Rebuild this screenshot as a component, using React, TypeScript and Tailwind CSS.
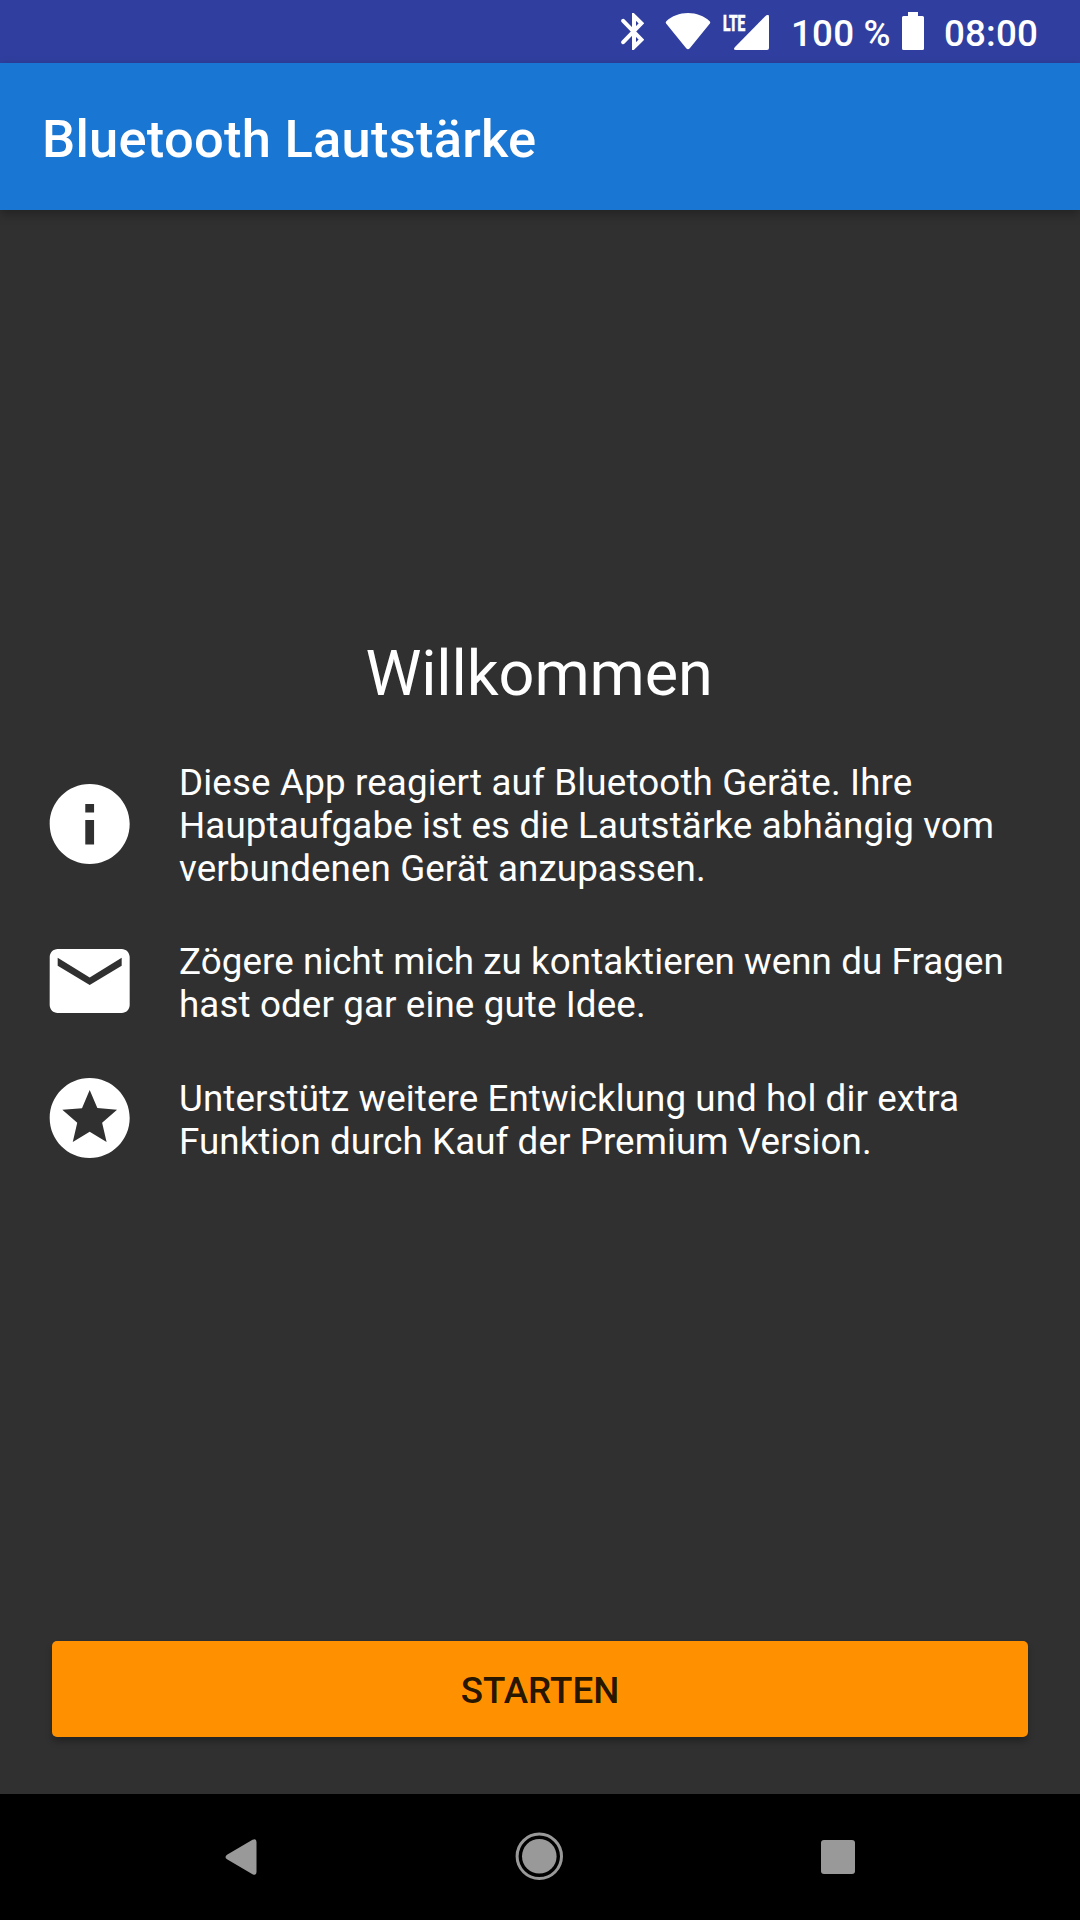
import type { ReactNode } from "react";

const features = [
  {
    path: "M12 2C6.48 2 2 6.48 2 12s4.48 10 10 10 10-4.48 10-10S17.52 2 12 2zm1.100 15.100h-2.200v-6.100h2.200v6.100zm0-8h-2.200V7h2.200v2.100z",
    lines: [
      { text: "Diese App reagiert auf Bluetooth Geräte. Ihre", spacing: "tracking-[0.15px]" },
      { text: "Hauptaufgabe ist es die Lautstärke abhängig vom", spacing: "tracking-[0.11px]" },
      { text: "verbundenen Gerät anzupassen.", spacing: "tracking-[0.085px]" },
    ],
  },
  {
    path: "M20 4H4c-1.1 0-1.99.9-1.99 2L2 18c0 1.1.9 2 2 2h16c1.1 0 2-.9 2-2V6c0-1.1-.9-2-2-2zm0 4.200l-8 4.800-8-4.800V6.200l8 4.900 8-4.900V8.200z",
    lines: [
      { text: "Zögere nicht mich zu kontaktieren wenn du Fragen", spacing: "tracking-[0.07px]" },
      { text: "hast oder gar eine gute Idee.", spacing: "tracking-[0.11px]" },
    ],
  },
  {
    path: "M11.99 2C6.47 2 2 6.48 2 12s4.47 10 9.99 10C17.52 22 22 17.52 22 12S17.52 2 11.99 2zm4.24 16L12 15.45 7.77 18l1.12-4.81-3.73-3.23 4.92-.42L12 5l1.92 4.53 4.92.42-3.73 3.23L16.23 18z",
    lines: [
      { text: "Unterstütz weitere Entwicklung und hol dir extra", spacing: "tracking-[0.08px]" },
      { text: "Funktion durch Kauf der Premium Version.", spacing: "tracking-[0.065px]" },
    ],
  },
];

function StatusBar() {
  return (
    <header className="flex h-[63px] shrink-0 items-start bg-[#303f9f] pl-[621px] text-[36.75px] font-medium leading-[43px] text-white">
      <svg className="mt-[13px] h-[37px] w-[23px] shrink-0" viewBox="0 0 23 37" fill="none" stroke="#fff" strokeWidth="4">
        <path d="M2.200 7.800 20.400 26.700 13 34V3L20.400 10.300 2.200 29.200" strokeLinecap="round" />
      </svg>
      <svg className="ml-[21px] mt-[13px] h-[37px] w-[46px] shrink-0" viewBox="0 0 46 37" fill="#fff">
        <path d="M1.3 8.2C7 3 14.500 0 23 0s16 3 21.700 8.200q1 1.200.2 2.400L24.800 35.200q-1.800 2-3.600 0L1.100 10.600q-.8-1.200.2-2.400z" />
      </svg>
      <div className="relative ml-[23px] mt-[15px] h-[35px] w-[35px] shrink-0">
        <svg className="h-[35px] w-[35px]" viewBox="0 0 35 35" fill="#fff">
          <path d="M31.500 1Q35-2 35 2v31q0 2-2 2H2q-3.500 0-1-3z" />
        </svg>
        <span className="absolute -left-[11.500px] -top-[4px] origin-left scale-x-[0.61] text-[22.5px] font-extrabold leading-[24px] [-webkit-text-stroke:0.7px_white]">LTE</span>
      </div>
      <span className="ml-[22px] mt-[12px] w-[100px] whitespace-nowrap tracking-[0.2px]">100 %</span>
      <svg className="ml-[11px] mt-[12px] h-[38px] w-[22px] shrink-0" viewBox="0 0 22 38" fill="#fff">
        <path d="M6 0h10v4h4.500Q22 4 22 5.500v31Q22 38 20.500 38h-19Q0 38 0 36.500v-31Q0 4 1.500 4H6z" />
      </svg>
      <span className="ml-[20px] mt-[12px] tracking-[0.15px]">08:00</span>
    </header>
  );
}

function AppBar({ children }: { children: ReactNode }) {
  return (
    <div className="relative flex h-[147px] shrink-0 items-center bg-[#1976d2] pl-[42px] pt-[5px] shadow-[0_4px_10px_rgba(0,0,0,0.3)]">
      <h1 className="text-[52.5px] font-medium leading-[62px] tracking-[0.24px] text-white">{children}</h1>
    </div>
  );
}

function NavBar() {
  return (
    <nav className="flex h-[126px] shrink-0 items-start bg-black pl-[225px] text-[#999]">
      <svg className="mt-[45px] h-[36px] w-[32px]" viewBox="0 0 32 36" fill="currentColor">
        <path d="M2 15.700 27.500.8Q31.500-1 31.500 3v30q0 4-4 2.200L2 20.300q-3-2.300 0-4.600z" />
      </svg>
      <svg className="ml-[258px] mt-[38px] h-[48px] w-[48px]" viewBox="0 0 48 48">
        <circle cx="24.300" cy="24.300" r="22.200" fill="none" stroke="currentColor" strokeWidth="3" />
        <circle cx="24.300" cy="24.300" r="17.300" fill="currentColor" />
      </svg>
      <div className="ml-[258px] mt-[46px] h-[34px] w-[34px] rounded-[3px] bg-[#999]" />
    </nav>
  );
}

export default function App() {
  return (
    <div className="flex h-[1920px] w-[1080px] flex-col overflow-hidden bg-[#303030] font-['Roboto',sans-serif]">
      <StatusBar />
      <AppBar>Bluetooth Lautstärke</AppBar>
      <main className="flex flex-1 flex-col text-white">
        <h2 className="mt-[427px] pr-[2px] text-center text-[63px] leading-[74px] tracking-[-0.12px]">Willkommen</h2>
        <div className="mt-[50px] flex flex-col gap-[51px] pl-[41px] text-[36.75px] leading-[43px]">
          {features.map(({ path, lines }) => (
            <section key={path} className="flex items-center first:mb-[-1px]">
              <svg className="-mb-[3px] -mt-[7px] h-[96px] w-[96px] shrink-0" viewBox="-0.17 0 24 24" fill="#fff">
                <path d={path} />
              </svg>
              <p className="ml-[42px] whitespace-nowrap">
                {lines.map(({ text, spacing }) => (
                  <span key={text} className={`block ${spacing}`}>{text}</span>
                ))}
              </p>
            </section>
          ))}
        </div>
        <button className="mx-[52px] mb-[57px] mt-auto h-[96px] rounded-[5px] bg-[#ff9100] pt-[2px] text-[36.75px] font-medium leading-[43px] text-black/87 shadow-[0_5px_6px_rgba(0,0,0,0.25)]">
          STARTEN
        </button>
      </main>
      <NavBar />
    </div>
  );
}
